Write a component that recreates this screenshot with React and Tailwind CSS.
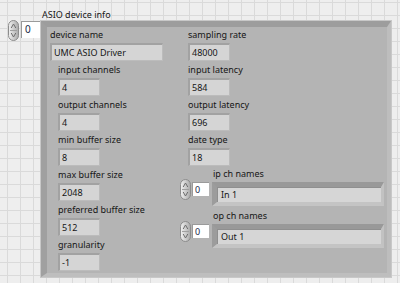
import React from "react";

const Spinner = () => (
  <svg width="11" height="21" viewBox="0 0 11 21" className="block shrink-0">
    <defs>
      <linearGradient id="spg" x1="0" x2="1" y1="0" y2="0">
        <stop offset="0" stopColor="#f2f2f2" />
        <stop offset="1" stopColor="#a9a9a9" />
      </linearGradient>
    </defs>
    <rect x="0.5" y="0.5" width="10" height="20" rx="5" fill="url(#spg)" stroke="#8c8c8c" />
    <line x1="2" y1="10.5" x2="9" y2="10.5" stroke="#a0a0a0" />
    <path d="M3.2 8 L5.5 4 L7.8 8" fill="none" stroke="#6e6e6e" />
    <path d="M3.2 13 L5.5 17 L7.8 13" fill="none" stroke="#6e6e6e" />
  </svg>
);

const Label = ({ children, first }) => (
  <div className={(first ? "h-[16px] leading-[16px]" : "h-[17px] leading-[18px]") + " whitespace-nowrap text-[#161616]"}>
    {children}
  </div>
);

const NumBox = ({ value, w = "w-[42px]" }) => (
  <div
    className={
      w +
      " h-[18px] bg-[#d5d5d5] border-t-2 border-l-2 border-r border-b border-t-[#a2a2a2] border-l-[#a2a2a2] border-r-[#bcbcbc] border-b-[#bcbcbc] pl-[2px] leading-[15px] text-[#161616] whitespace-nowrap"
    }
  >
    {value}
  </div>
);

const Item = ({ label, value, first, w }) => (
  <div className="flex flex-col">
    <Label first={first}>{label}</Label>
    <NumBox value={value} w={w} />
  </div>
);

const IndexBox = () => (
  <div className="w-[17px] h-[14px] bg-white border-t border-l border-t-[#9a9a9a] border-l-[#9a9a9a] pl-[2px] leading-[13px] text-[#1c2b4a]">
    0
  </div>
);

const ArrayRow = ({ label, value }) => (
  <div className="flex flex-row items-start">
    <div className="flex flex-row items-start mt-[13px]">
      <Spinner />
      <div className="ml-[1px] mt-[3px]">
        <IndexBox />
      </div>
    </div>
    <div className="flex flex-col ml-[3px]">
      <div className="h-[16px] leading-[16px] pl-[1px] text-[#161616] whitespace-nowrap">{label}</div>
      <div className="w-[172px] h-[24px] bg-[#b0b0b0] border-t-[5px] border-l-[5px] border-r-[3px] border-b-[4px] border-t-[#999999] border-l-[#9c9c9c] border-r-[#c2c2c2] border-b-[#c4c4c4]">
        <div className="h-full bg-[#d6d6d6] border-t border-l border-t-[#8f8f8f] border-l-[#8f8f8f] pl-[3px] leading-[14px] text-[#161616] whitespace-nowrap">
          {value}
        </div>
      </div>
    </div>
  </div>
);

export default function App() {
  return (
    <div
      className="w-[400px] h-[283px] overflow-hidden bg-[#eeeeee] bg-[linear-gradient(to_right,#dadada_1px,transparent_1px),linear-gradient(to_bottom,#dadada_1px,transparent_1px)] bg-[size:13px_13px] bg-[position:7px_2px] text-[9px]"
      style={{ fontFamily: '"Noto Sans", "Open Sans", sans-serif' }}
    >
      <div className="pt-[8px]">
        <div className="h-[13px] leading-[13px] pl-[42px] text-[#161616]">ASIO device info</div>
        <div className="flex flex-row items-start">
          <div className="ml-[8px] mt-[-1px]">
            <Spinner />
          </div>
          <div className="ml-[2px] w-[19px] h-[17px] bg-white border-t border-l border-t-[#9a9a9a] border-l-[#9a9a9a] pl-[3px] leading-[15px] text-[#1c2b4a] text-[10px]">
            0
          </div>
          <div className="ml-[1px] w-[350px] h-[256px] bg-[#b4b4b4] border-t-[6px] border-l-[6px] border-r-[4px] border-b-[4px] border-t-[#9d9d9d] border-l-[#a0a0a0] border-r-[#bdbdbd] border-b-[#bebebe] shadow-[0_0_0_1px_#c8c8c8]">
            <div className="flex flex-row">
              <div className="flex flex-col pl-[3px]">
                <Item first label="device name" value="UMC ASIO Driver" w="w-[113px]" />
                <div className="flex flex-col pl-[8px]">
                  <Item label="input channels" value="4" />
                  <Item label="output channels" value="4" />
                  <Item label="min buffer size" value="8" />
                  <Item label="max buffer size" value="2048" />
                  <Item label="preferred buffer size" value="512" />
                  <Item label="granularity" value="-1" />
                </div>
              </div>
              <div className="flex flex-col ml-[17px]">
                <div className="flex flex-col pl-[8px]">
                  <Item first label="sampling rate" value="48000" />
                  <Item label="input latency" value="584" />
                  <Item label="output latency" value="696" />
                  <Item label="date type" value="18" />
                </div>
                <ArrayRow label="ip ch names" value="In 1" />
                <div className="mt-[2px]">
                  <ArrayRow label="op ch names" value="Out 1" />
                </div>
              </div>
            </div>
          </div>
        </div>
      </div>
    </div>
  );
}
